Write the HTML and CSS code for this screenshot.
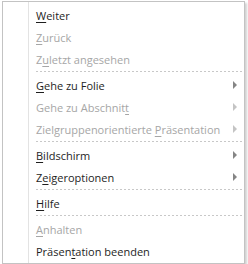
FILE: index.html
```html
<!DOCTYPE html>
<html lang="de">
<head>
    <meta charset="UTF-8">
    <title>Kontextmenü</title>
    <link rel="stylesheet" href="styles.css">
</head>
<body>
    <div class="menu">
        <div class="item"><span class="label"><u>W</u>eiter</span></div>
        <div class="item disabled"><span class="label"><u>Z</u>urück</span></div>
        <div class="item disabled"><span class="label">Z<u>u</u>letzt angesehen</span></div>
        <div class="sep"></div>
        <div class="item sub"><span class="label"><u>G</u>ehe zu Folie</span><span class="arrow"></span></div>
        <div class="item sub disabled"><span class="label">Gehe zu Abschnit<u>t</u></span><span class="arrow"></span></div>
        <div class="item sub disabled"><span class="label">Zielgruppenorientierte <u>P</u>räsentation</span><span class="arrow"></span></div>
        <div class="sep"></div>
        <div class="item sub"><span class="label"><u>B</u>ildschirm</span><span class="arrow"></span></div>
        <div class="item sub"><span class="label">Z<u>e</u>igeroptionen</span><span class="arrow"></span></div>
        <div class="sep"></div>
        <div class="item"><span class="label"><u>H</u>ilfe</span></div>
        <div class="sep"></div>
        <div class="item disabled"><span class="label"><u>A</u>nhalten</span></div>
        <div class="item"><span class="label">Präsen<u>t</u>ation beenden</span></div>
    </div>
</body>
</html>
```

FILE: styles.css
```css
body {
    margin: 0;
    background: #fff;
    font-family: "Open Sans", "Noto Sans", sans-serif;
    font-size: 11px;
    color: #1e1e1e;
}

.menu {
    margin: 1px 0 0 2px;
    width: 241px;
    padding: 2px 0 1px;
    border: 1px solid #c3c3c3;
    box-shadow: 2px 2px 2px rgba(0, 0, 0, 0.18);
    background: linear-gradient(to right, transparent 25px, #e3e3e3 25px, #e3e3e3 26px, transparent 26px), #fff;
}

.item {
    display: flex;
    align-items: center;
    height: 22px;
    padding: 0 7px 0 33px;
}

.label {
    flex: 1;
    white-space: nowrap;
}

.label u {
    text-decoration-thickness: 1px;
    text-underline-offset: 2px;
}

.disabled {
    color: #a6a6a6;
}

.arrow {
    width: 0;
    height: 0;
    border-top: 4px solid transparent;
    border-bottom: 4px solid transparent;
    border-left: 4px solid #858585;
}

.disabled .arrow {
    border-left-color: #c4c4c4;
}

.sep {
    height: 4px;
    margin: 0 2px 0 33px;
    background: linear-gradient(to right, #c8c8c8 2px, transparent 2px) 0 1px / 4px 1px repeat-x;
}
```
